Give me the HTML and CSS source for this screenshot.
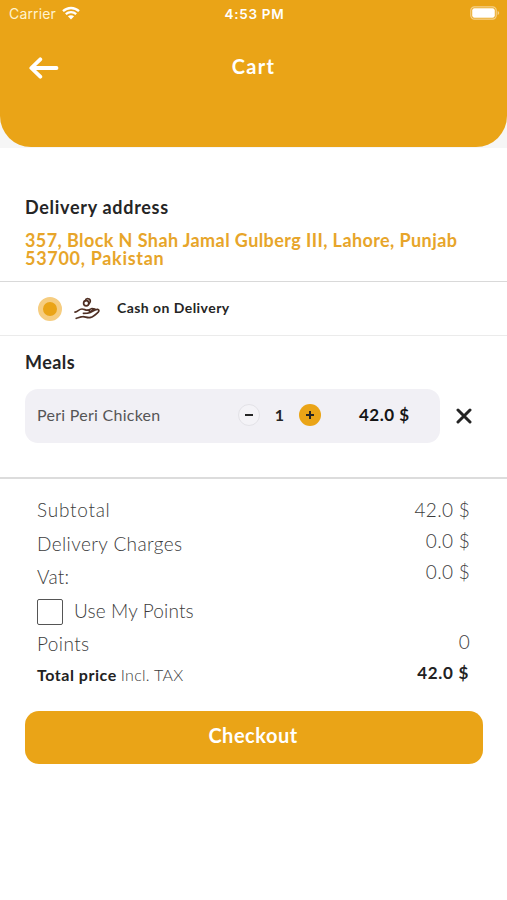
FILE: index.html
```html
<!DOCTYPE html>
<html lang="en">
<head>
<meta charset="utf-8">
<title>Cart</title>
<link rel="stylesheet" href="styles.css">
</head>
<body>
<div class="top">
<header class="header">
  <div class="status">
    <div class="carrier"><span>Carrier</span>
      <svg class="wifi" viewBox="0 0 18 14"><path d="M1 5.2C5.6.9 12.4.9 17 5.2M3.8 8.1c3-2.700 7.400-2.700 10.400 0" fill="none" stroke="currentColor" stroke-width="2.300"/><path d="M5.900 10.300c1.800-1.500 4.400-1.500 6.200 0L9 13.500z" fill="currentColor"/></svg>
    </div>
    <span class="clock">4:53 PM</span>
    <svg class="battery" viewBox="0 0 30 14"><rect x=".8" y=".8" width="25.400" height="12.400" rx="3.600" fill="none" stroke="currentColor" stroke-opacity=".5" stroke-width="1.200"/><rect x="2.200" y="2.200" width="22.600" height="9.600" rx="2.200" fill="currentColor"/><path d="M27.600 5v4q1.600-.6 1.600-2t-1.600-2z" fill="currentColor" fill-opacity=".5"/></svg>
  </div>
  <div class="nav">
    <svg class="back" viewBox="0 0 30 22"><path d="M27.500 11H3M11.300 2.300 2.300 11l9 8.700" fill="none" stroke="currentColor" stroke-width="3.800" stroke-linecap="round" stroke-linejoin="round"/></svg>
    <h1 class="title">Cart</h1>
  </div>
</header>
</div>
<main>
  <section class="address">
    <h2 class="heading">Delivery address</h2>
    <p class="address-text">357, Block N Shah Jamal Gulberg III, Lahore, Punjab <span class="postal">53700, Pakistan</span></p>
  </section>
  <section class="payment">
    <span class="radio"></span>
    <svg class="hand" viewBox="0 0 26 24" fill="none" stroke="#4e2e22" stroke-width="1.700" stroke-linecap="round" stroke-linejoin="round"><circle cx="12.200" cy="6.300" r="2.600"/><path d="M11.300 3.700c.6-2.900 5.200-2.500 5 .6-.1 1.300-.6 1.900-1.500 2.500M1 15.200c2.800-.5 4-3.200 7-3.200 2.200 0 3.200 1.200 5.200 1.200 3.300 0 3.500 2.800.2 3l-4 .1M14.500 16c3.500-1 6.300-4 9.200-3.600 1.600.3 1.500 1.700.3 2.900-2.500 2.300-4.500 4.400-7.300 5.100-3.500.8-5.500-1-8-.8-2.700.1-4.500 1.700-6.500 1.700"/><path d="m13.500 13.300 4.500-1.800 3 .4-5 2.600" stroke-width="1.400"/></svg>
    <span class="payment-name">Cash on Delivery</span>
  </section>
  <section class="meals">
    <h2 class="heading meals-heading">Meals</h2>
    <div class="meal-row">
      <div class="meal">
        <span class="meal-name">Peri Peri Chicken</span>
        <span class="step minus"></span>
        <span class="qty">1</span>
        <span class="step plus"></span>
        <span class="meal-price">42.0 $</span>
      </div>
      <svg class="remove" viewBox="0 0 16 16"><path d="m2 2 12 12M14 2 2 14" stroke="currentColor" stroke-width="3" stroke-linecap="round"/></svg>
    </div>
  </section>
  <section class="summary">
    <div class="labels">
      <span class="subtotal">Subtotal</span>
      <span class="charges">Delivery Charges</span>
      <span>Vat:</span>
      <label class="points"><span class="box"></span><span>Use My Points</span></label>
      <span class="points-label">Points</span>
      <span class="total"><b>Total price</b><span>Incl. TAX</span></span>
    </div>
    <div class="values">
      <span>42.0 $</span>
      <span>0.0 $</span>
      <span>0.0 $</span>
      <span class="value-points">0</span>
      <b class="value-total">42.0 $</b>
    </div>
  </section>
  <button class="checkout">Checkout</button>
</main>
</body>
</html>
```
FILE: styles.css
```css
* { box-sizing: border-box; }
body { margin: 0; background: #fff; color: #252525; font-family: Lato, sans-serif; overflow: hidden; }
h1, h2, p { margin: 0; }
svg { display: block; flex: none; }
.top { background: #f6f6f6; height: 148px; }
.header { height: 147px; background: #eaa417; color: #fff; border-radius: 0 0 31px 31px; }
.status { height: 27px; display: grid; grid-template-columns: 1fr auto 1fr; align-items: center; padding: 0 7px 0 9px; font-family: Inter, sans-serif; }
.carrier { display: flex; align-items: center; gap: 6px; font-size: 14px; letter-spacing: .15px; color: #fff3d0; }
.wifi { width: 18px; height: 14px; margin-bottom: 1px; color: #fff; }
.clock { font-size: 13.5px; font-weight: 600; letter-spacing: .7px; }
.battery { width: 30px; height: 14px; margin-bottom: 1px; justify-self: end; }
.nav { height: 80px; display: grid; grid-template-columns: 1fr auto 1fr; align-items: center; padding: 2px 29px 0; }
.back { width: 30px; height: 22px; }
.title { font-size: 20px; line-height: 24px; font-weight: 700; letter-spacing: 1.3px; padding-bottom: 4px; }
.address { height: 134px; padding: 47px 25px 0; border-bottom: 1px solid #d9d9d9; }
.heading { font-size: 18px; line-height: 24px; font-weight: 700; letter-spacing: .7px; }
.address-text { margin-top: 12px; font-size: 18px; line-height: 18px; font-weight: 700; letter-spacing: .41px; color: #e7a52a; }
.postal { display: block; letter-spacing: .7px; }
.payment { height: 54px; display: flex; align-items: center; padding-left: 38px; border-bottom: 1px solid #ebebeb; }
.radio { width: 24px; height: 24px; border-radius: 50%; background: #eaa417; border: 5px solid #f6cd80; }
.hand { width: 26px; height: 24px; margin-left: 12px; }
.payment-name { margin: 0 0 2px 17px; font-size: 14px; font-weight: 700; letter-spacing: .45px; }
.meals { height: 143px; padding: 14px 25px 0; border-bottom: 2px solid #dcdcdc; }
.meals-heading { letter-spacing: .45px; }
.meal-row { display: flex; align-items: center; margin-top: 15px; }
.meal { width: 415px; height: 54px; border-radius: 13px; background: #f1f0f5; display: flex; align-items: center; padding: 0 0 3px 12px; }
.meal-name { width: 201px; font-size: 16px; letter-spacing: .27px; color: #555; }
.step { width: 22px; height: 22px; border-radius: 50%; display: grid; place-items: center; }
.step::before, .plus::after { content: ""; grid-area: 1 / 1; width: 8px; height: 2px; background: #252525; }
.plus::after { width: 2px; height: 8px; }
.minus { border: 1px solid #e3e2e7; background: #f4f3f7; }
.plus { background: #eaa417; }
.qty { width: 39px; text-align: center; font-size: 16px; font-weight: 700; }
.meal-price { margin-left: 38px; font-size: 17px; font-weight: 700; letter-spacing: .5px; color: #151515; }
.remove { width: 16px; height: 16px; margin: 0 0 0 16px; }
.summary { display: flex; justify-content: space-between; padding: 14px 37px 0; height: 232px; font-size: 19px; font-weight: 300; letter-spacing: .3px; color: #3c3c3c; }
.labels { display: flex; flex-direction: column; line-height: 33.6px; }
.subtotal { letter-spacing: .75px; }
.charges, .points-label { letter-spacing: .4px; }
.points { display: flex; align-items: center; gap: 11px; letter-spacing: .15px; }
.box { width: 26px; height: 26px; margin-top: 2px; border: 1.5px solid #555; border-radius: 2px; }
.total { display: flex; gap: 4px; font-size: 16px; line-height: 28px; }
.total b { letter-spacing: .53px; }
.total b, .value-total { color: #222; font-weight: 700; }
.values { display: flex; flex-direction: column; align-items: flex-end; padding-top: 1px; line-height: 31px; }
.value-points { margin-top: 39px; }
.value-total { margin-right: 1px; font-size: 17px; letter-spacing: .7px; }
.checkout { display: block; width: 458px; height: 53px; margin: 0 25px; padding: 0 2px 5px 0; border: 0; border-radius: 14px; background: #eaa417; color: #fff; font: 700 20px Lato, sans-serif; letter-spacing: .5px; }
```
